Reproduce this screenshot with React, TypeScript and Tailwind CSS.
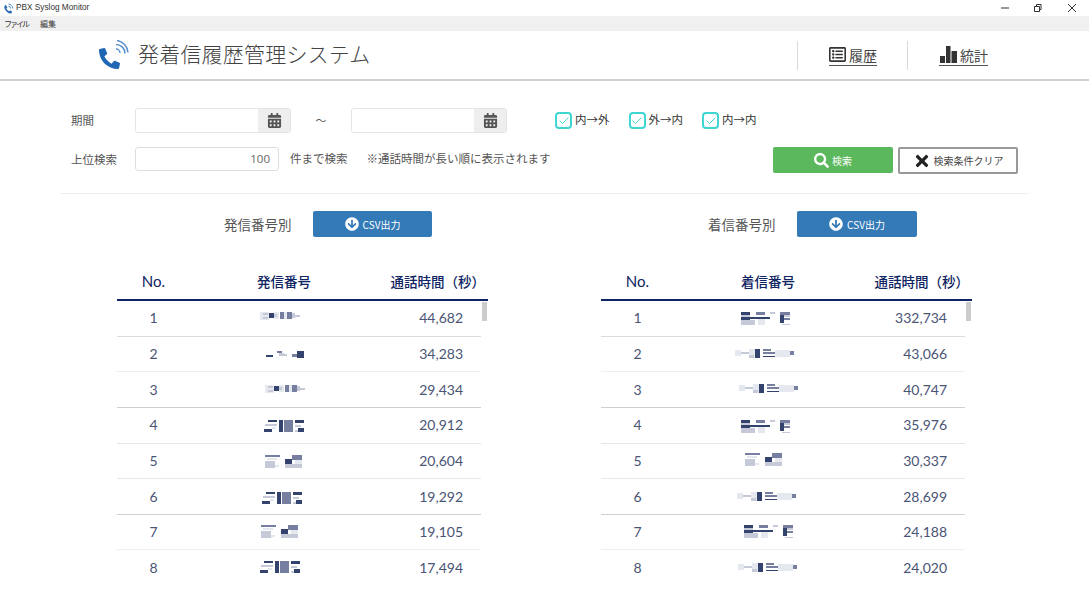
import React from 'react';
import { FaArrowCircleDown, FaCalendarAlt, FaPhoneAlt, FaRegListAlt, FaSearch, FaTimes } from 'react-icons/fa';
import { Check } from 'lucide-react';

const jp = 'font-["Noto_Sans_CJK_JP",sans-serif]';

type Block = [number, number, number, number, string];

const D = '#34426e';
const M = '#767f9f';
const L = '#c5c9d8';
const P = '#e6e8ef';

// rough copies of the blurred phone numbers
const patterns: Record<string, Block[]> = {
  a: [
    [0, 1, 9, 8, P], [3, 2, 5, 2, L], [3, 6, 5, 2, L], [9, 2, 5, 5, D], [14, 1, 5, 7, P], [14, 3, 3, 3, L],
    [20, 1, 4, 7, M], [24, 1, 3, 7, P], [27, 1, 5, 7, M], [32, 2, 3, 5, L], [35, 4, 5, 2, L],
  ],
  b: [
    [0, 4, 7, 2, D], [11, 0, 5, 2, M], [13, 2, 5, 3, L], [18, 3, 3, 2, L], [26, 3, 5, 3, M],
    [31, 0, 7, 7, D],
  ],
  c: [
    [4, 0, 9, 2, D], [1, 4, 12, 2, L], [0, 9, 8, 3, D], [8, 7, 4, 2, P], [15, 0, 4, 12, D],
    [20, 0, 9, 12, M], [31, 0, 9, 3, D], [31, 5, 6, 2, L], [34, 8, 6, 4, D], [31, 10, 3, 2, L],
  ],
  d: [
    [0, 0, 15, 2, M], [2, 3, 10, 2, P], [0, 6, 10, 7, L], [10, 10, 4, 2, P], [27, 0, 10, 5, M],
    [20, 4, 7, 5, D], [30, 5, 7, 8, P], [20, 9, 17, 4, L],
  ],
  e: [
    [0, 0, 9, 3, D], [0, 3, 9, 2, L], [0, 5, 9, 3, D], [0, 8, 14, 5, L], [9, 5, 20, 2, D],
    [15, 0, 9, 3, M], [17, 7, 7, 6, P], [29, 0, 5, 2, L], [39, 0, 10, 3, M], [39, 3, 4, 8, D],
    [43, 3, 6, 2, L], [43, 6, 6, 2, M], [41, 12, 8, 1, L],
  ],
  f: [
    [0, 1, 6, 6, P], [6, 3, 12, 2, L], [14, 0, 6, 9, P], [14, 6, 5, 3, L], [20, 0, 5, 9, D],
    [28, 0, 8, 2, M], [28, 3, 12, 2, M], [28, 7, 12, 1, D], [40, 1, 15, 7, P], [55, 2, 4, 4, M],
  ],
};

const numbersLeft = [
  { p: 'a', x: 70, y: 11, v: '44,682' },
  { p: 'b', x: 76, y: 15, v: '34,283' },
  { p: 'a', x: 75, y: 12, v: '29,434' },
  { p: 'c', x: 74, y: 13, v: '20,912' },
  { p: 'd', x: 75, y: 12, v: '20,604' },
  { p: 'c', x: 72, y: 13, v: '19,292' },
  { p: 'd', x: 71, y: 11, v: '19,105' },
  { p: 'c', x: 70, y: 11, v: '17,494' },
];

const numbersRight = [
  { p: 'e', x: 67, y: 12, v: '332,734' },
  { p: 'f', x: 61, y: 13, v: '43,066' },
  { p: 'f', x: 65, y: 12, v: '40,747' },
  { p: 'e', x: 67, y: 13, v: '35,976' },
  { p: 'd', x: 71, y: 10, v: '30,337' },
  { p: 'f', x: 63, y: 13, v: '28,699' },
  { p: 'e', x: 70, y: 11, v: '24,188' },
  { p: 'f', x: 64, y: 13, v: '24,020' },
];

// the source page was scaled down, so the row lines do not all come out alike
const lineColors = [
  'border-[#dcdcdc]', 'border-[#eeeeee]', 'border-[#cfcfcf]', 'border-[#e6e6e6]',
  'border-[#e8e8e8]', 'border-[#cfcfcf]', 'border-[#eeeeee]', 'border-transparent',
];

const Mosaic = ({ pattern, x, y }: { pattern: string; x: number; y: number }) => (
  <svg width="188" height="35" viewBox="0 0 188 35" className="block">
    <g transform={`translate(${x} ${y})`}>
      {patterns[pattern].map((b, i) => (
        <rect key={i} x={b[0]} y={b[1]} width={b[2]} height={b[3]} fill={b[4]} />
      ))}
    </g>
  </svg>
);

const DateInput = () => (
  <div className="flex h-[25px] w-[156px] rounded-[3px] border border-[#e4e4e4]">
    <div className="flex-1 bg-white rounded-l-[3px]" />
    <div className="w-[32px] flex items-center justify-center bg-[#eeeeee] rounded-r-[3px]">
      <FaCalendarAlt size={15} className="text-[#555555]" />
    </div>
  </div>
);

const CheckItem = ({ label }: { label: string }) => (
  <label className="flex items-center gap-[3px] text-[11.5px] text-[#333333]">
    <span className="w-[17px] h-[17px] rounded-[4px] border-2 border-[#3fd5d1] flex items-center justify-center">
      <Check size={12} strokeWidth={2} className="text-[#3fd5d1]" />
    </span>
    <span className="-mt-[2px]">{label}</span>
  </label>
);

const Table = ({
  title,
  numberLabel,
  rows,
  buttonWidth,
}: {
  title: string;
  numberLabel: string;
  rows: { p: string; x: number; y: number; v: string }[];
  buttonWidth: string;
}) => (
  <div className="w-[371px]">
    <div className="flex items-center gap-[22px] pl-[107px] h-[26px]">
      <span className="text-[13.5px] text-[#555555] w-[67px] whitespace-nowrap">{title}</span>
      <button className={`${buttonWidth} h-[26px] rounded-[2px] bg-[#337ab7] text-white text-[10px] flex items-center justify-center gap-[4px]`}>
        <FaArrowCircleDown size={14} />
        <span>CSV出力</span>
      </button>
    </div>
    <div className="mt-[27px] flex items-center h-[37px] border-b-2 border-[#0f2462] text-[13.5px] font-medium text-[#0f2462]">
      <div className="w-[73px] text-center font-['Lato',sans-serif] font-normal text-[15px]">No.</div>
      <div className="w-[188px] text-center">{numberLabel}</div>
      <div className="flex-1 text-right pr-[3px] whitespace-nowrap">通話時間（秒）</div>
    </div>
    <div className="relative w-[364px]">
      {rows.map((r, i) => (
        <div
          key={i}
          className={`flex items-center h-[35.65px] pb-[1px] border-b ${lineColors[i]} font-['Lato',sans-serif] text-[14px] text-[#4a5475]`}
        >
          <div className="w-[73px] text-center">{i + 1}</div>
          <div className="w-[188px]">
            <Mosaic pattern={r.p} x={r.x} y={r.y} />
          </div>
          <div className="flex-1 text-right pr-[18px]">{r.v}</div>
        </div>
      ))}
      <div className="absolute top-[1px] right-[-6px] w-[5px] h-[19px] bg-[#cccccc]" />
    </div>
  </div>
);

export default function App() {
  return (
    <div className={`${jp} w-[1089px] h-[603px] overflow-hidden bg-white`}>
      {/* window title bar */}
      <div className="flex items-center h-[16px] pl-[2px] text-[8.25px] text-[#333333]">
        <svg width="13" height="13" viewBox="0 0 24 24" className="text-[#2f6db5]">
          <path d="M5 7c-2 3 0 7 3 10s6 5 9 4l2-3-4-3-2 2c-2-1-4-3-5-5l2-2-3-5z" fill="currentColor" />
          <path d="M12 8a4 4 0 0 1 4 4M12 4a8 8 0 0 1 8 8" fill="none" stroke="currentColor" strokeWidth="1.5" />
        </svg>
        <span className="ml-[1px] font-['Liberation_Sans',sans-serif]">PBX Syslog Monitor</span>
        <div className="ml-auto flex items-center">
          <svg width="99" height="16" viewBox="0 0 99 16" className="text-[#333333]">
            <path d="M11 8h8" stroke="currentColor" fill="none" />
            <path d="M44.500 6.500h5v5h-5zM46.500 6.500v-2h4.500v5h-1.500" stroke="currentColor" fill="none" />
            <path d="M78 4l8 8M86 4l-8 8" stroke="currentColor" fill="none" />
          </svg>
        </div>
      </div>
      {/* menu */}
      <div className="flex items-center gap-[12px] h-[15px] pl-[4px] bg-[#f0f0f0] text-[8px] text-[#333333]">
        <span className="tracking-[-2px]">ファイル</span>
        <span>編集</span>
      </div>
      {/* app header */}
      <header className="flex items-center h-[50px] border-b-2 border-[#d0d0d0]">
        <div className="relative ml-[99px] w-[30px] h-[30px]">
          <FaPhoneAlt size={21} className="absolute left-0 bottom-[1px] text-[#1f66b5]" />
          <svg width="16" height="16" viewBox="0 0 16 16" className="absolute right-0 top-0 text-[#5b93cf]">
            <path d="M3 9a4 4 0 0 1 4 4M3 4.500a9 9 0 0 1 9 9M4 .5a13 13 0 0 1 11 12" fill="none" stroke="currentColor" strokeWidth="1.5" />
          </svg>
        </div>
        <h1 className="ml-[9px] -mt-[2px] text-[21px] tracking-[0.2px] font-light text-[#444444]">発着信履歴管理システム</h1>
        <div className="ml-auto flex items-center h-[29px] mr-[101px] text-[#444444]">
          <div className="w-[110px] h-full border-l border-[#d8d8d8] pl-[31px] flex items-center">
            <a className="flex items-center gap-[3px] border-b border-[#555555] text-[14px] leading-[20px] h-[21px]">
              <FaRegListAlt size={17} className="text-[#333333]" />
              <span>履歴</span>
            </a>
          </div>
          <div className="w-[81px] h-full border-l border-[#d8d8d8] pl-[31px] flex items-center">
            <a className="flex items-center gap-[3px] border-b border-[#555555] text-[14px] leading-[20px] h-[21px]">
              <svg width="18" height="17" viewBox="0 0 18 17" className="text-[#333333]">
                <path d="M1 10h5v7H1zM7 0h4.500v17H7zM12.500 5H18v12h-5.500z" fill="currentColor" />
              </svg>
              <span>統計</span>
            </a>
          </div>
        </div>
      </header>

      {/* search conditions */}
      <section className="ml-[60px] w-[969px] border-b border-[#eeeeee] pl-[11px] pt-[27px] pb-[19px] text-[11.5px] text-[#555555]">
        <div className="flex items-center h-[25px]">
          <span className="w-[64px] mt-[1px]">期間</span>
          <DateInput />
          <span className="w-[60px] text-center text-[11px]">～</span>
          <DateInput />
          <div className="ml-[48px] flex items-center gap-[19px]">
            <CheckItem label="内→外" />
            <CheckItem label="外→内" />
            <CheckItem label="内→内" />
          </div>
        </div>
        <div className="flex items-start mt-[14px] h-[27px]">
          <span className="w-[64px] h-[24px] leading-[24px]">上位検索</span>
          <div className="w-[144px] h-[24px] rounded-[3px] border border-[#dddddd] text-right pr-[8px] leading-[22px] text-[#666666] font-['Open_Sans',sans-serif]">
            100
          </div>
          <span className="ml-[11px] h-[24px] leading-[22px]">件まで検索</span>
          <span className="ml-[19px] h-[24px] leading-[22px]">※通話時間が長い順に表示されます</span>
          <button className="ml-auto w-[120px] h-[26px] rounded-[2px] bg-[#5cb85c] text-white text-[10px] flex items-center justify-center gap-[3px]">
            <FaSearch size={15} />
            <span>検索</span>
          </button>
          <button className="ml-[5px] mr-[11px] w-[120px] h-[27px] rounded-[2px] border-2 border-[#999999] text-[#444444] text-[10px] flex items-center justify-center gap-[3px]">
            <FaTimes size={18} className="text-[#222222]" />
            <span>検索条件クリア</span>
          </button>
        </div>
      </section>

      {/* result tables */}
      <main className="flex mt-[17px] pl-[117px] gap-[113px]">
        <Table title="発信番号別" numberLabel="発信番号" rows={numbersLeft} buttonWidth="w-[119px]" />
        <Table title="着信番号別" numberLabel="着信番号" rows={numbersRight} buttonWidth="w-[120px]" />
      </main>
    </div>
  );
}
